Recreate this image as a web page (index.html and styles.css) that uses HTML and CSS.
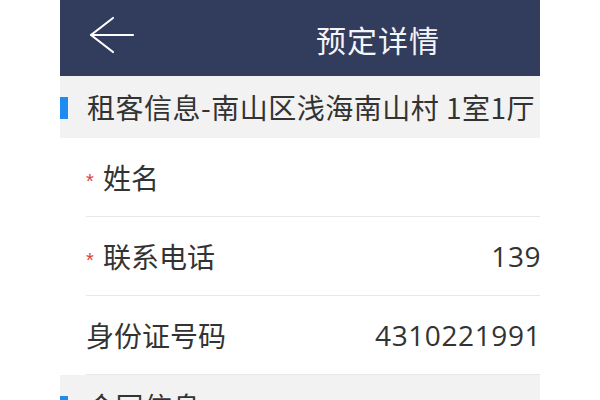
FILE: index.html
```html
<!DOCTYPE html>
<html lang="zh-CN">
<head>
<meta charset="utf-8">
<title>预定详情</title>
<link rel="stylesheet" href="styles.css">
</head>
<body>
<div class="frame">
  <div class="screen">
    <header class="topbar">
      <svg class="back" width="46" height="40" viewBox="0 0 46 40" aria-hidden="true">
        <path d="M44 19 H2 M2 19 L24 2 M2 19 L24 36" fill="none" stroke="#ffffff" stroke-width="2.2" stroke-linecap="round" stroke-linejoin="round"/>
      </svg>
      <h1 class="title">预定详情</h1>
    </header>
    <section>
      <div class="sec-head"><span class="mark"></span><span class="sec-title">租客信息-南山区浅海南山村 1室1厅</span></div>
      <div class="row"><span class="req">*</span><span class="label">姓名</span><span class="value"></span></div>
      <div class="row"><span class="req">*</span><span class="label">联系电话</span><span class="value">13912345678</span></div>
      <div class="row"><span class="label">身份证号码</span><span class="value">431022199105060012</span></div>
    </section>
    <section>
      <div class="sec-head"><span class="mark"></span><span class="sec-title">合同信息</span></div>
    </section>
  </div>
</div>
</body>
</html>
```

FILE: styles.css
```css
html, body {
  margin: 0;
  padding: 0;
  background: #ffffff;
}
body {
  font-family: "Noto Sans CJK SC", "Noto Sans", sans-serif;
  color: #333333;
}
.frame {
  width: 480px;
  height: 400px;
  margin-left: 60px;
  overflow: hidden;
}
.screen {
  width: 636px;
}
.topbar {
  height: 76px;
  background: #323c5c;
  display: flex;
  align-items: center;
  justify-content: center;
  position: relative;
}
.back {
  position: absolute;
  left: 29px;
  top: 16px;
}
.title {
  margin: 0;
  font-size: 30px;
  font-weight: normal;
  color: #f4f5f8;
  line-height: 1;
  padding-top: 2px;
  letter-spacing: 1px;
}
.sec-head {
  height: 62px;
  background: #f2f2f2;
  display: flex;
  align-items: center;
}
.mark {
  width: 8px;
  height: 22px;
  background: #1f8af2;
  margin-right: 19px;
  margin-top: 1px;
}
.sec-title {
  font-size: 28px;
  color: #333333;
  line-height: 1;
  letter-spacing: 0.5px;
}
.row {
  height: 78px;
  margin-left: 26px;
  border-bottom: 1px solid #e8e8e8;
  display: flex;
  align-items: center;
  padding-right: 22px;
}
.req {
  color: #e0403c;
  font-size: 20px;
  width: 17px;
  line-height: 1;
  padding-top: 8px;
  font-family: "Liberation Sans", sans-serif;
}
.label {
  font-size: 28px;
  color: #333333;
  line-height: 1;
}
.value {
  margin-left: auto;
  font-family: "Open Sans", "Noto Sans CJK SC", sans-serif;
  font-size: 28px;
  color: #333333;
  line-height: 1;
  white-space: nowrap;
  letter-spacing: 0.6px;
}
```
